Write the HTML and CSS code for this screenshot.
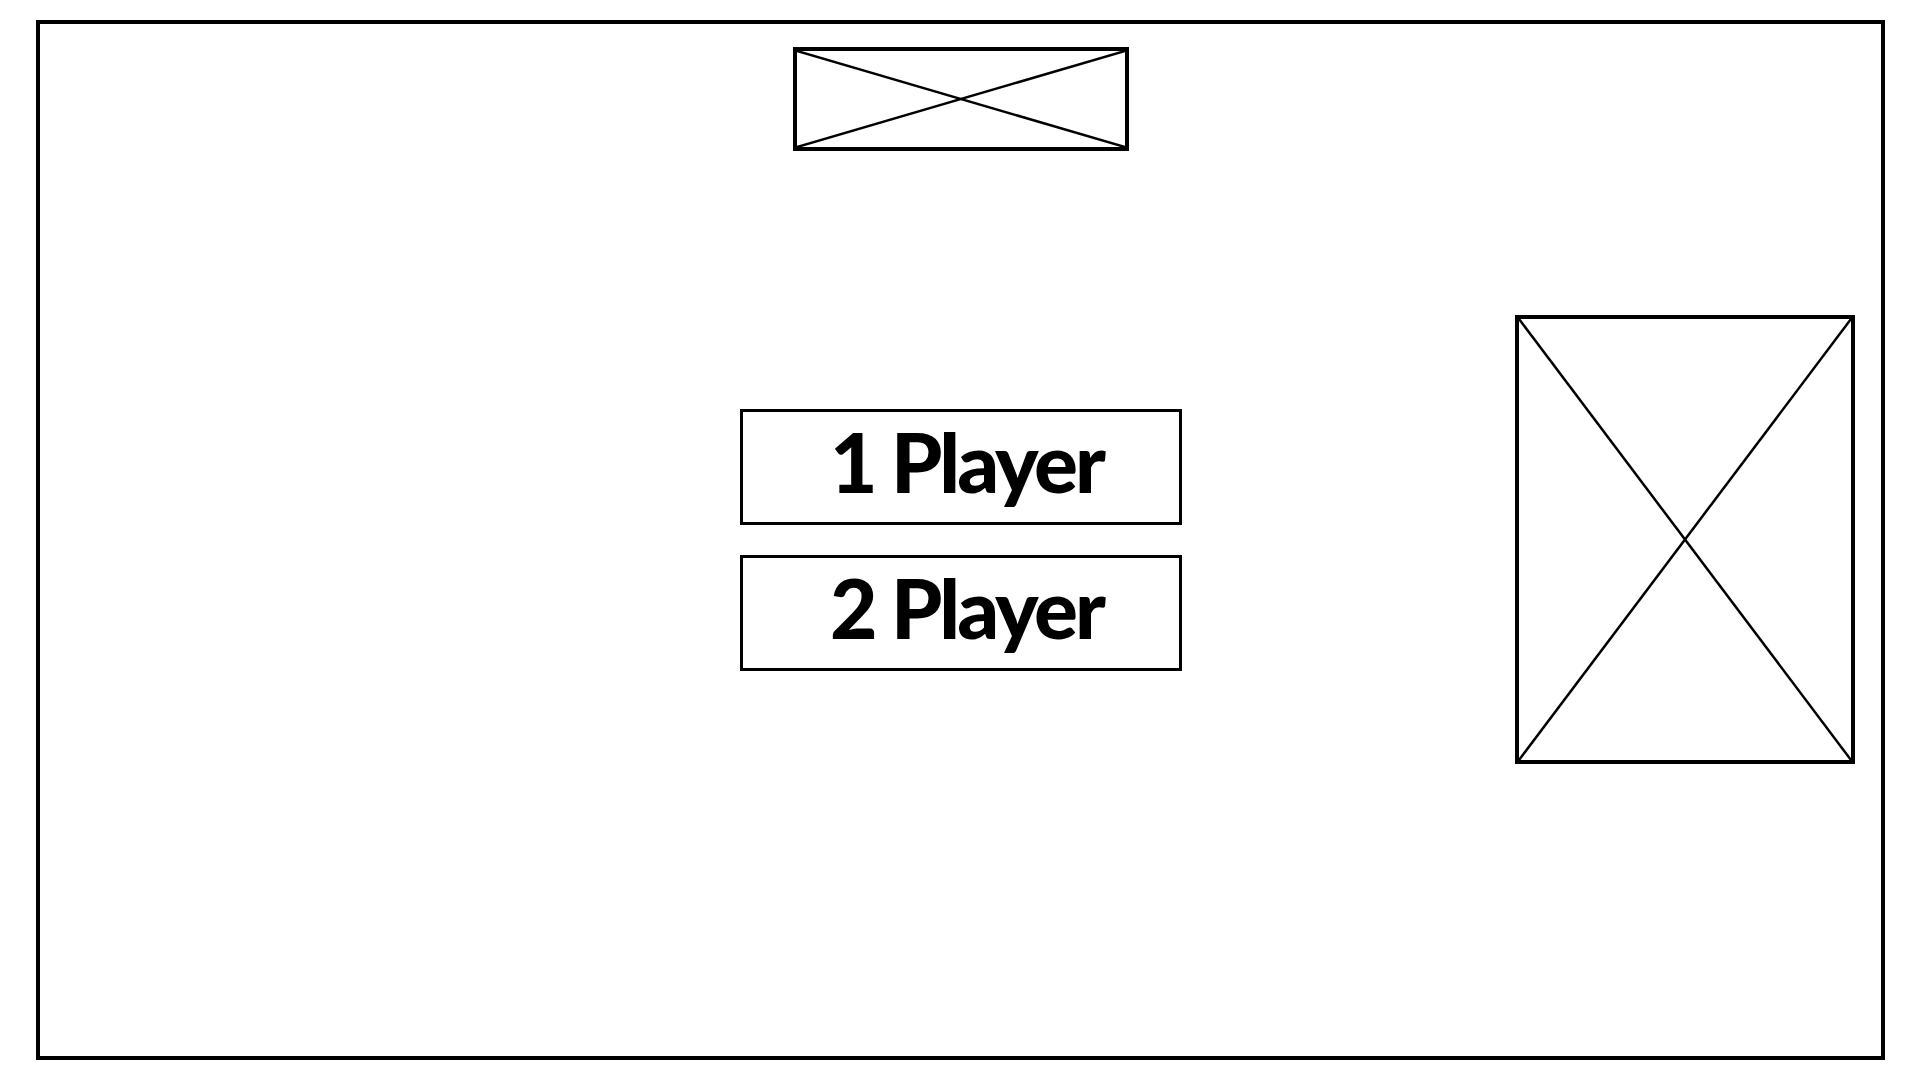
FILE: index.html
```html
<!DOCTYPE html>
<html lang="en">
<head>
    <meta charset="UTF-8">
    <meta name="viewport" content="width=device-width, initial-scale=1.0">
    <title>Game Menu Wireframe</title>
    <link rel="stylesheet" href="styles.css">
</head>
<body>
    <div class="screen">
        <div class="placeholder logo">
            <svg viewBox="0 0 100 100" preserveAspectRatio="none">
                <line x1="0" y1="0" x2="100" y2="100" />
                <line x1="0" y1="100" x2="100" y2="0" />
            </svg>
        </div>

        <div class="main-row">
            <div class="spacer"></div>
            <div class="menu">
                <button class="menu-button">1 Player</button>
                <button class="menu-button">2 Player</button>
            </div>
            <div class="side">
                <div class="placeholder picture">
                    <svg viewBox="0 0 100 100" preserveAspectRatio="none">
                        <line x1="0" y1="0" x2="100" y2="100" />
                        <line x1="0" y1="100" x2="100" y2="0" />
                    </svg>
                </div>
            </div>
        </div>
    </div>
</body>
</html>
```

FILE: styles.css
```css
body {
    margin: 0;
    background: #fff;
    font-family: 'Lato', 'Open Sans', sans-serif;
    color: #000;
}
.screen {
    box-sizing: border-box;
    width: 1849px;
    height: 1040px;
    margin: 20px 0 0 36px;
    border: 4px solid #000;
    display: flex;
    flex-direction: column;
}
.placeholder {
    box-sizing: border-box;
    border: 4px solid #000;
    background: #fff;
}
.placeholder svg {
    display: block;
    width: 100%;
    height: 100%;
}
.placeholder line {
    stroke: #000;
    stroke-width: 2.5px;
    vector-effect: non-scaling-stroke;
}
.logo {
    width: 336px;
    height: 104px;
    margin: 23px auto 0;
}
.main-row {
    display: grid;
    grid-template-columns: 1fr 442px 1fr;
    align-items: start;
    margin-top: 164px;
}
.menu {
    display: flex;
    flex-direction: column;
    gap: 30px;
    padding-top: 94px;
}
.menu-button {
    box-sizing: border-box;
    height: 116px;
    border: 3px solid #000;
    background: #fff;
    padding: 0 0 12px 12px;
    font-family: inherit;
    font-weight: 900;
    font-size: 82px;
    letter-spacing: -3px;
    color: #000;
    line-height: 1;
}
.side {
    display: flex;
    justify-content: flex-end;
    padding-right: 26px;
}
.picture {
    width: 340px;
    height: 449px;
}
```
